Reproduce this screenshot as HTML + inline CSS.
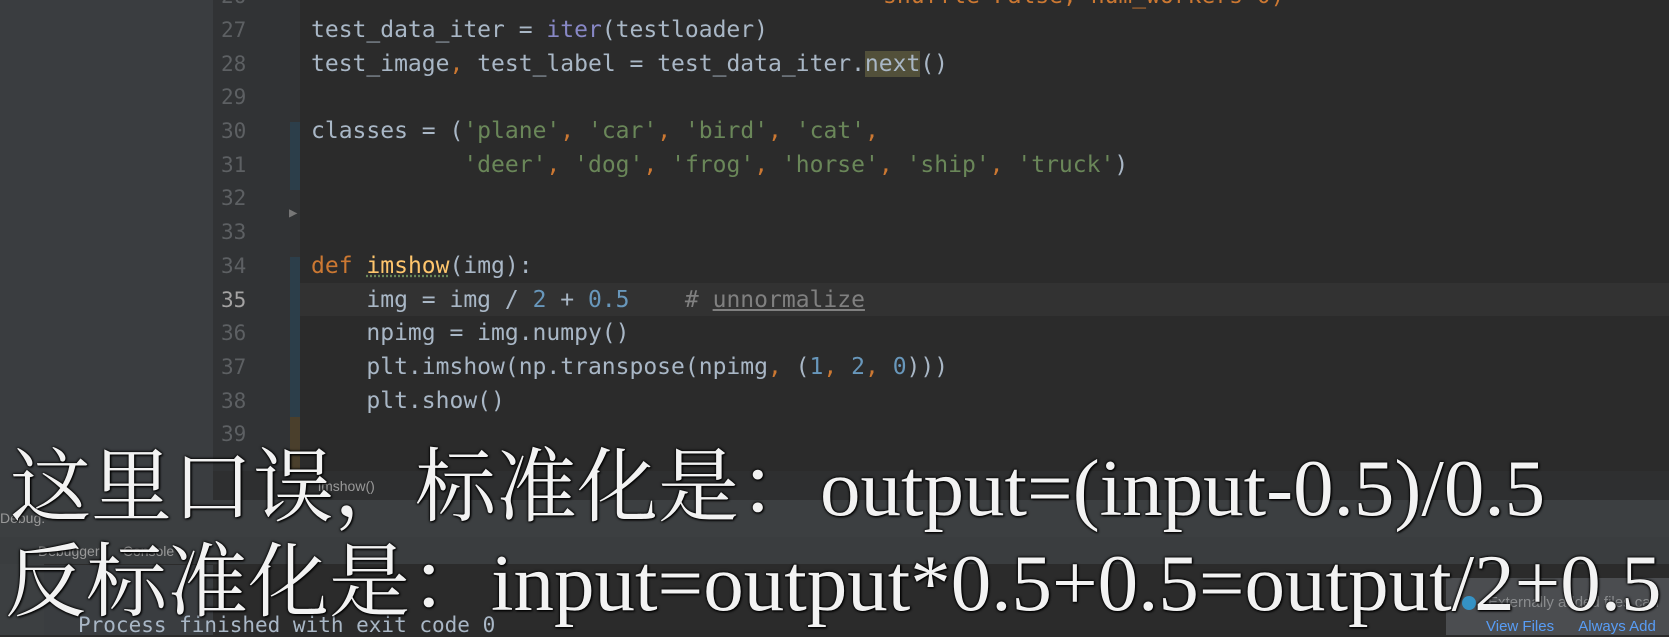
<!DOCTYPE html>
<html><head><meta charset="utf-8"><style>
body{margin:0;width:1669px;height:635px;overflow:hidden;background:#2b2b2b;position:relative;font-family:"DejaVu Sans Mono",monospace;}
.abs{position:absolute}
.ln{position:absolute;left:0;width:1669px;height:34px;line-height:34px;font-size:23px;color:#a9b7c6;white-space:pre}
.ln .n{position:absolute;left:221px;color:#5d6063;font-size:21px}
.ln .c{position:absolute;left:311px}
.s{color:#6a8759}.k{color:#cc7832}.num{color:#6897bb}.f{color:#8888c6}
.sub{position:absolute;color:#f2f2f2;font-family:"Liberation Serif","Noto Serif CJK SC",serif;font-size:81px;white-space:pre;text-shadow:0 0 3px #000,0 0 2px #000,1px 1px 2px #000;line-height:1}
</style></head><body>
<div class="abs" style="left:0;top:0;width:213px;height:635px;background:#3a3d40"></div>
<div class="abs" style="left:213px;top:0;width:87px;height:471px;background:#313335"></div>
<div class="abs" style="left:300px;top:283px;width:1369px;height:33px;background:#323232"></div>
<div class="abs" style="left:290px;top:122px;width:10px;height:68px;background:#2c3e4a"></div>
<div class="abs" style="left:290px;top:257px;width:10px;height:160px;background:#2c3e4a"></div>
<div class="abs" style="left:290px;top:417px;width:10px;height:54px;background:#4a3f2c"></div>
<div class="ln" style="top:-21px"><span class="n">26</span><span class="c" style="left:883px;color:#cc7832">shuffle=False, num_workers=0)</span></div>
<div class="ln" style="top:13px"><span class="n">27</span><span class="c">test_data_iter = <span class="f">iter</span>(testloader)</span></div>
<div class="ln" style="top:47px"><span class="n">28</span><span class="c">test_image<span class="k">,</span> test_label = test_data_iter.<span style="background:#52503a">next</span>()</span></div>
<div class="ln" style="top:80px"><span class="n">29</span></div>
<div class="ln" style="top:114px"><span class="n">30</span><span class="c">classes = (<span class="s">'plane'</span><span class="k">,</span> <span class="s">'car'</span><span class="k">,</span> <span class="s">'bird'</span><span class="k">,</span> <span class="s">'cat'</span><span class="k">,</span></span></div>
<div class="ln" style="top:148px"><span class="n">31</span><span class="c">           <span class="s">'deer'</span><span class="k">,</span> <span class="s">'dog'</span><span class="k">,</span> <span class="s">'frog'</span><span class="k">,</span> <span class="s">'horse'</span><span class="k">,</span> <span class="s">'ship'</span><span class="k">,</span> <span class="s">'truck'</span>)</span></div>
<div class="ln" style="top:181px"><span class="n">32</span></div>
<div class="ln" style="top:215px"><span class="n">33</span></div>
<div class="ln" style="top:249px"><span class="n">34</span><span class="c"><span class="k">def</span> <span style="color:#ffc66d;text-decoration:underline dotted #6a8759">imshow</span>(img):</span></div>
<div class="ln" style="top:283px"><span class="n" style="color:#a4a3a3">35</span><span class="c">    img = img / <span class="num">2</span> + <span class="num">0.5</span>    <span style="color:#808080"># <u>unnormalize</u></span></span></div>
<div class="ln" style="top:316px"><span class="n">36</span><span class="c">    npimg = img.numpy()</span></div>
<div class="ln" style="top:350px"><span class="n">37</span><span class="c">    plt.imshow(np.transpose(npimg<span class="k">,</span> (<span class="num">1</span><span class="k">,</span> <span class="num">2</span><span class="k">,</span> <span class="num">0</span>)))</span></div>
<div class="ln" style="top:384px"><span class="n">38</span><span class="c">    plt.show()</span></div>
<div class="ln" style="top:417px"><span class="n">39</span></div>
<div class="abs" style="left:289px;top:205px;color:#777;font-size:14px">▶</div>
<div class="abs" style="left:213px;top:471px;width:1456px;height:29px;background:#2e2f30"></div>
<div class="abs" style="left:318px;top:478px;color:#999;font:14px 'Liberation Sans',sans-serif">imshow()</div>
<div class="abs" style="left:0;top:500px;width:1669px;height:37px;background:#3c3f41"></div>
<div class="abs" style="left:0;top:537px;width:1669px;height:27px;background:#3a3d3f;border-bottom:1px solid #2b2b2b"></div>
<div class="abs" style="left:0;top:564px;width:44px;height:71px;background:#3c3f41"></div>
<div class="abs" style="left:0;top:510px;color:#999;font:14px 'Liberation Sans',sans-serif">Debug:</div>
<div class="abs" style="left:38px;top:543px;color:#999;font:14px 'Liberation Sans',sans-serif">Debugger &nbsp;&nbsp;&nbsp;&nbsp; Console</div>
<div class="abs" style="left:78px;top:613px;color:#a9b7c6;font-size:21px;white-space:pre">Process finished with exit code 0</div>
<div class="abs" style="left:1446px;top:578px;width:223px;height:57px;background:#4b4d50"></div>
<div class="abs" style="left:1462px;top:596px;width:14px;height:14px;border-radius:50%;background:#3592c4"></div>
<div class="abs" style="left:1488px;top:594px;color:#8a8c8e;font:15px 'Liberation Sans',sans-serif;white-space:nowrap">Externally added files can</div>
<div class="abs" style="left:1486px;top:618px;color:#589df6;font:15px 'Liberation Sans',sans-serif;white-space:nowrap">View Files &nbsp;&nbsp;&nbsp;&nbsp; Always Add</div>
<div class="sub" style="left:10px;top:448px">这里口误，标准化是：output=(input-0.5)/0.5</div>
<div class="sub" style="left:5px;top:543px">反标准化是：input=output*0.5+0.5=output/2+0.5</div>
</body></html>
